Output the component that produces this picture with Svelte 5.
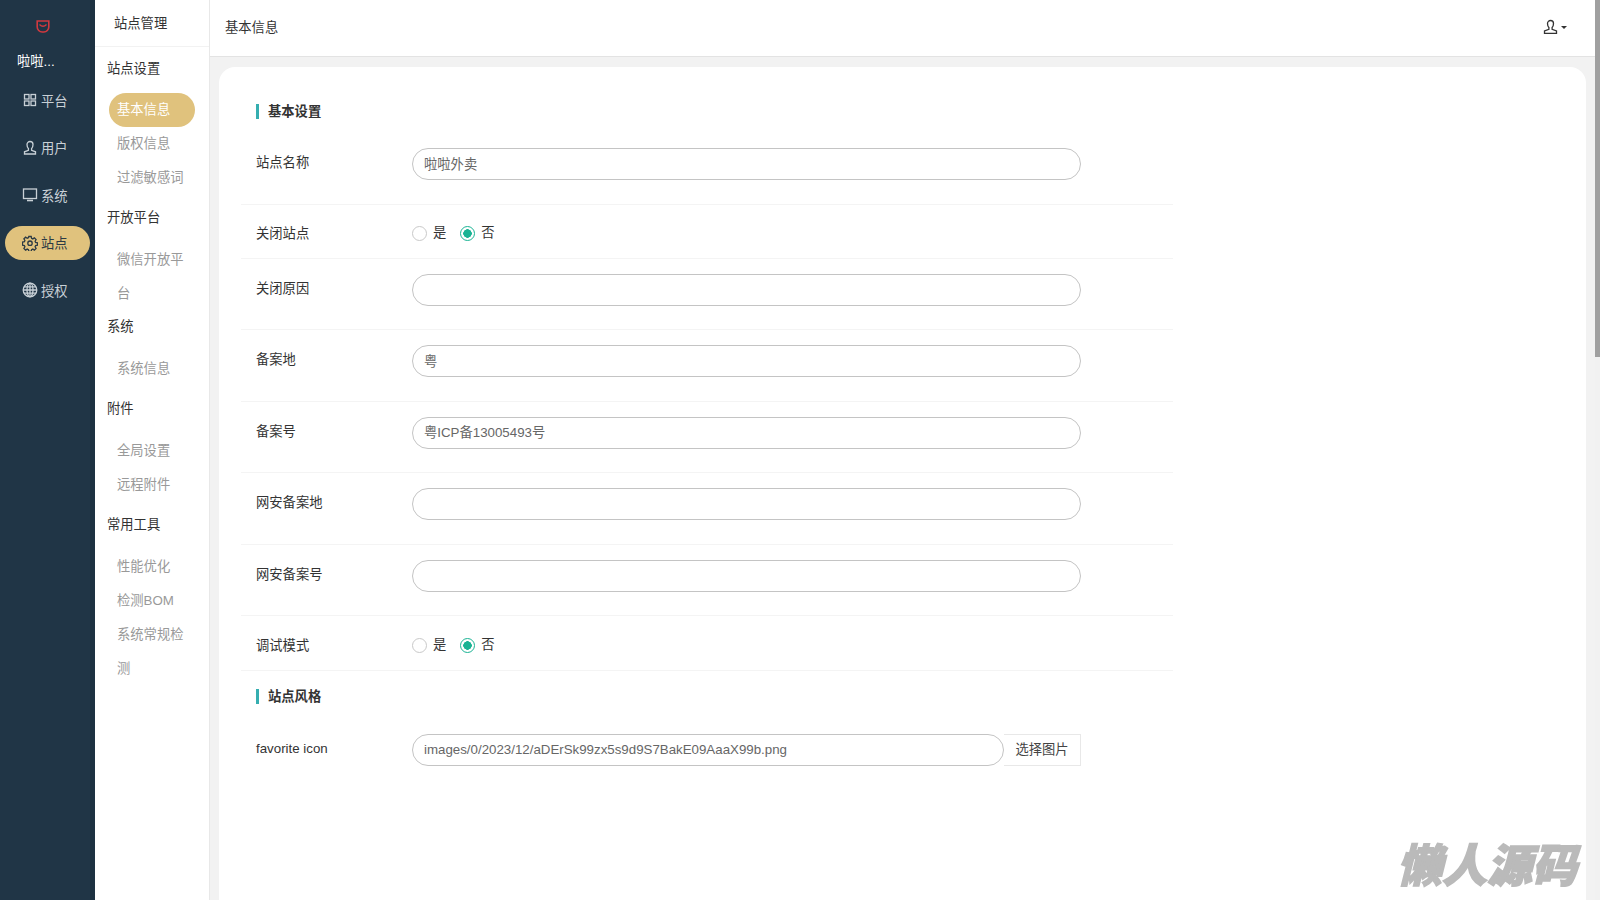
<script>
  const nav = [
    { name: '平台', icon: 'grid' },
    { name: '用户', icon: 'user' },
    { name: '系统', icon: 'monitor' },
    { name: '站点', icon: 'gear', active: true },
    { name: '授权', icon: 'globe' }
  ];

  const sections = [
    { title: '站点设置', items: [{ name: '基本信息', active: true }, { name: '版权信息' }, { name: '过滤敏感词' }] },
    { title: '开放平台', items: [{ name: '微信开放平台', wrap: true }] },
    { title: '系统', items: [{ name: '系统信息' }] },
    { title: '附件', items: [{ name: '全局设置' }, { name: '远程附件' }] },
    { title: '常用工具', items: [{ name: '性能优化' }, { name: '检测BOM' }, { name: '系统常规检测', wrap: true }] }
  ];

  const rows = [
    { label: '站点名称', value: '啦啦外卖', first: true },
    { label: '关闭站点', radio: true, short: true },
    { label: '关闭原因', value: '' },
    { label: '备案地', value: '粤' },
    { label: '备案号', value: '粤ICP备13005493号' },
    { label: '网安备案地', value: '' },
    { label: '网安备案号', value: '' },
    { label: '调试模式', radio: true }
  ];
</script>

<div class="page">
  <aside class="nav">
    <div class="logo">
      <svg width="14" height="13" viewBox="0 0 14 13" fill="none">
        <path d="M1.2 1h11.600v6a5 5 0 0 1-5 5H6.200a5 5 0 0 1-5-5z" stroke="#d2393f" stroke-width="1.6" />
        <path d="M3.500 4.500q3.500 3.500 7 0" stroke="#d2393f" stroke-width="1.4" />
      </svg>
    </div>
    <div class="brand">啦啦...</div>
    {#each nav as item}
      <div class="nav-item" class:active={item.active}>
        <svg class="nav-icon" width="16" height="16" viewBox="0 0 16 16" fill="none" stroke="currentColor" stroke-width="1.3">
          {#if item.icon === 'grid'}
            <rect x="2.500" y="2.500" width="4.500" height="4.500" />
            <rect x="9" y="2.500" width="4.500" height="4.500" />
            <rect x="2.500" y="9" width="4.500" height="4.500" />
            <rect x="9" y="9" width="4.500" height="4.500" />
          {:else if item.icon === 'user'}
            <path d="M5 4.500a3 3 0 0 1 6 0c0 2-.8 3.400-1.400 4v1.800l3.900 1.500v2.200h-11v-2.200l3.900-1.500V8.500C5.800 7.900 5 6.500 5 4.500z" />
          {:else if item.icon === 'monitor'}
            <rect x="1.500" y="2" width="13" height="9.500" />
            <path d="M5 13.500h6" stroke-width="1.600" />
          {:else if item.icon === 'gear'}
            <path d="M6.800 1.500h2.400l.4 1.900 1.200.5 1.600-1 1.700 1.700-1 1.600.5 1.200 1.900.4v2.400l-1.900.4-.5 1.200 1 1.600-1.700 1.700-1.600-1-1.200.5-.4 1.900H6.800l-.4-1.900-1.200-.5-1.600 1-1.700-1.700 1-1.600-.5-1.200-1.900-.4V7.100l1.900-.4.5-1.200-1-1.600 1.700-1.700 1.600 1 1.200-.5z" />
            <circle cx="8" cy="8.200" r="2.200" />
          {:else}
            <circle cx="8" cy="8" r="6.800" />
            <ellipse cx="8" cy="8" rx="3" ry="6.800" />
            <path d="M1.200 8h13.600M2 4.800h12M2 11.200h12M8 1.200v13.600" />
          {/if}
        </svg>
        <span>{item.name}</span>
      </div>
    {/each}
  </aside>

  <aside class="sub">
    <div class="sub-head">站点管理</div>
    {#each sections as section}
      <div class="sub-title">{section.title}</div>
      {#each section.items as item}
        <div class="sub-item" class:active={item.active} class:wrap={item.wrap}>{item.name}</div>
      {/each}
    {/each}
  </aside>

  <div class="main">
    <header class="top">
      <span>基本信息</span>
      <div class="account">
        <svg width="15" height="16" viewBox="0 0 15 16" fill="none" stroke="#333" stroke-width="1.300">
          <path d="M4.500 4.500a3 3 0 0 1 6 0c0 2-.8 3.400-1.400 4v1.800l4.400 1.700v2.300h-12V12l4.400-1.700V8.500c-.6-.6-1.400-2-1.400-4z" />
        </svg>
        <i class="caret"></i>
      </div>
    </header>

    <div class="content">
      <section class="card">
        <h3 class="legend">基本设置</h3>
        <div class="form">
          {#each rows as row}
            <div class="row" class:first={row.first} class:radio-row={row.radio} class:short={row.short}>
              <div class="label">{row.label}</div>
              {#if row.radio}
                <div class="radios">
                  <i class="radio"></i><span>是</span>
                  <i class="radio on"></i><span>否</span>
                </div>
              {:else}
                <input class="input" value={row.value} />
              {/if}
            </div>
          {/each}
        </div>
        <h3 class="legend second">站点风格</h3>
        <div class="icon-row">
          <div class="label">favorite icon</div>
          <div class="group">
            <input class="input" value="images/0/2023/12/aDErSk99zx5s9d9S7BakE09AaaX99b.png" />
            <button class="pick">选择图片</button>
          </div>
        </div>
      </section>
    </div>
  </div>

  <div class="scrollbar"><div class="thumb"></div></div>
  <div class="watermark">懒人源码</div>
</div>

<style>
  :global(body) {
    margin: 0;
    overflow: hidden;
  }

  .page {
    display: flex;
    height: 900px;
    font-family: "Liberation Sans", "Noto Sans CJK SC", sans-serif;
    font-size: 13.3px;
    color: #333;
    overflow: hidden;
  }

  .nav {
    width: 95px;
    flex: none;
    box-sizing: border-box;
    background: #203546;
    border-right: 5px solid #1d3141;
    color: #c8d0d6;
  }

  .logo {
    height: 44px;
    display: flex;
    align-items: center;
    justify-content: center;
    padding: 8px 5px 0 0;
    box-sizing: border-box;
  }

  .brand {
    height: 20px;
    line-height: 20px;
    padding-left: 17px;
    margin-top: 8px;
    margin-bottom: 11px;
    color: #fff;
  }

  .nav-item {
    display: flex;
    align-items: center;
    gap: 3px;
    height: 34px;
    margin: 0 0 13.5px 5px;
    padding-left: 17px;
    border-radius: 17px;
  }

  .nav-item.active {
    background: #e0c27d;
    color: #2c3a44;
  }

  .sub {
    width: 115px;
    flex: none;
    box-sizing: border-box;
    background: #fff;
    border-right: 1px solid #e8e8e8;
  }

  .sub-head {
    height: 47px;
    line-height: 47px;
    padding-left: 19px;
    border-bottom: 1px solid #f2f2f2;
    box-sizing: border-box;
  }

  .sub-title {
    height: 20px;
    line-height: 20px;
    padding: 13px 0 15px 12px;
  }

  .sub-head + .sub-title {
    padding: 12px 0 14px 12px;
  }

  .sub-item {
    margin: 0 14px 0 14px;
    padding-left: 8px;
    height: 34px;
    line-height: 34px;
    color: #999;
    border-radius: 17px;
  }

  .sub-item.wrap {
    height: 68px;
    margin-bottom: -7px;
  }

  .sub-item.active {
    background: #e0c27d;
    color: #fff;
  }

  .main {
    flex: 1;
    min-width: 0;
    display: flex;
    flex-direction: column;
  }

  .top {
    height: 57px;
    flex: none;
    box-sizing: border-box;
    display: flex;
    align-items: center;
    justify-content: space-between;
    padding: 0 28px 4px 15px;
    background: #fff;
    border-bottom: 1px solid #e3e3e3;
  }

  .account {
    display: flex;
    align-items: center;
    gap: 3px;
    padding-top: 2px;
  }

  .caret {
    width: 0;
    height: 0;
    border: 3px solid transparent;
    border-top-color: #333;
    border-bottom: 0;
  }

  .content {
    flex: 1;
    min-height: 0;
    background: #f2f2f2;
    padding: 10px 9px 0 9px;
  }

  .card {
    height: 100%;
    box-sizing: border-box;
    background: #fff;
    border-radius: 16px 16px 0 0;
    padding: 37px 22px 0;
  }

  .legend {
    margin: 0 0 0 15px;
    padding-left: 9px;
    height: 15px;
    line-height: 15px;
    font-size: 13.3px;
    font-weight: bold;
    border-left: 3px solid #35aeb0;
  }

  .legend.second {
    margin-top: 18.5px;
  }

  .form {
    width: 932px;
    margin-top: 29px;
  }

  .row {
    display: flex;
    align-items: flex-start;
    padding: 15px 15px 0;
    border-bottom: 1px solid #f4f4f4;
    height: 71.4px;
    box-sizing: border-box;
  }

  .row.first {
    padding-top: 0;
    height: 57px;
  }

  .radio-row {
    height: 55px;
    padding: 6px 15px 0;
    align-items: center;
  }

  .radio-row.short {
    height: 54px;
    padding-top: 3px;
  }

  .radio-row.short .label {
    padding-top: 2px;
  }

  .label {
    width: 156px;
    flex: none;
    line-height: 30px;
  }

  .input {
    width: 669px;
    height: 32px;
    box-sizing: border-box;
    padding: 0 11px 2px;
    border: 1px solid #c4c4c4;
    border-radius: 16px;
    font: inherit;
    color: #666;
    outline: none;
    background: #fff;
  }

  .radios {
    display: flex;
    align-items: center;
  }

  .radios span {
    position: relative;
    top: -2px;
    margin: 0 14px 0 6px;
  }

  .radio {
    width: 13px;
    height: 13px;
    border: 1px solid #c9c9c9;
    border-radius: 50%;
    display: block;
  }

  .radio.on {
    border-color: #1ab394;
    background: radial-gradient(circle, #1ab394 0 4px, #fff 4.5px);
  }

  .icon-row {
    display: flex;
    padding: 30px 15px 0;
    width: 932px;
    box-sizing: border-box;
  }

  .group {
    display: flex;
  }

  .group .input {
    width: 592px;
  }

  .pick {
    width: 77px;
    height: 32px;
    padding: 0 0 3px;
    font: inherit;
    color: #444;
    background: #fff;
    border: 1px solid #e8e8e8;
    border-left: 0;
  }

  .scrollbar {
    width: 5px;
    flex: none;
    background: #f1f1f1;
  }

  .thumb {
    height: 357px;
    background: #a0a0a0;
  }

  .watermark {
    position: fixed;
    right: 23px;
    bottom: 7px;
    font-family: "Noto Sans CJK SC", sans-serif;
    font-size: 45px;
    line-height: 60px;
    font-weight: 900;
    font-style: italic;
    color: #bababa;
    -webkit-text-stroke: 1.5px #bababa;
  }
</style>
